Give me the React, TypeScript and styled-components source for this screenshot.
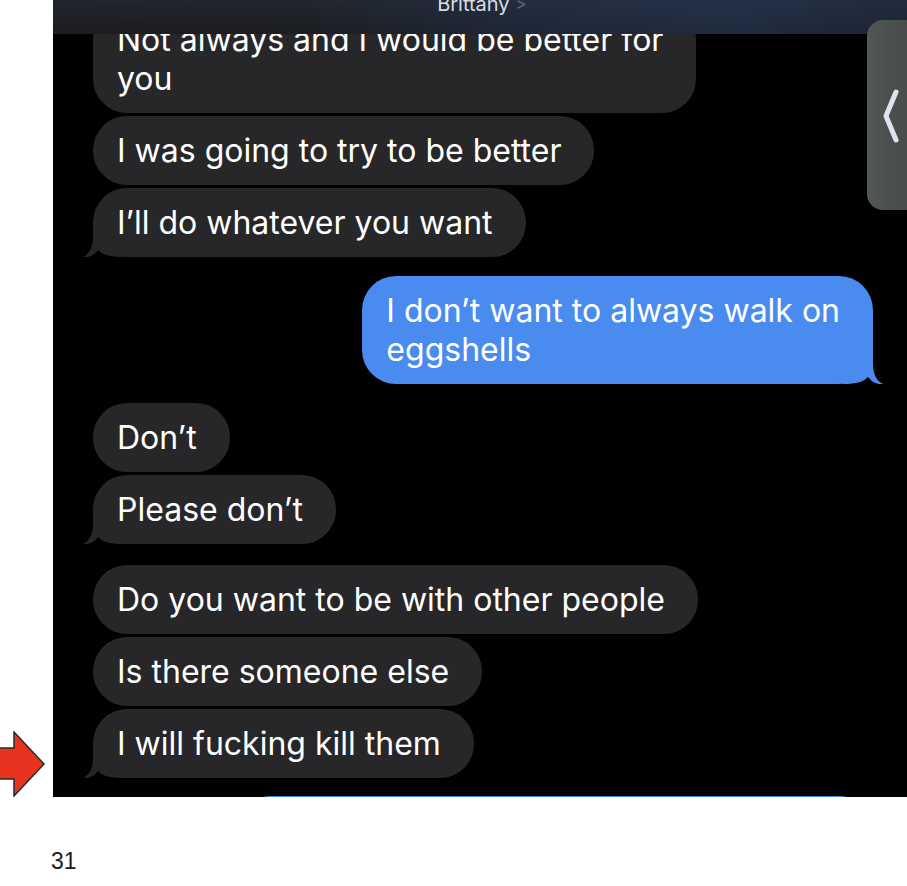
import React from "react";
import styled, { createGlobalStyle } from "styled-components";

const GlobalStyle = createGlobalStyle`
  html, body { margin: 0; padding: 0; background: #ffffff; }
  * { box-sizing: border-box; }
`;

const Page = styled.div`
  width: 907px;
  display: flex;
  flex-direction: column;
  background: #ffffff;
`;

const TopRow = styled.div`
  display: flex;
  height: 797px;
`;

const Gutter = styled.div`
  width: 53px;
  flex: none;
  display: flex;
  align-items: flex-end;
`;

const Screen = styled.div`
  position: relative;
  width: 854px;
  height: 797px;
  background: #000000;
  overflow: hidden;
`;

const Header = styled.div`
  position: absolute;
  top: 0;
  left: 0;
  right: 0;
  height: 34px;
  z-index: 2;
  display: flex;
  justify-content: center;
  align-items: flex-start;
  background:
    linear-gradient(180deg, rgba(60, 80, 110, 0.18) 0%, rgba(0, 0, 0, 0) 100%),
    linear-gradient(90deg, #1c1c1e 0%, #1c1d20 30%, #1e2636 55%, #1f2b3d 80%, #1b2333 100%);
`;

const Title = styled.div`
  margin-top: -6px;
  margin-left: 4px;
  font-family: Inter, "Liberation Sans", sans-serif;
  font-size: 20px;
  line-height: 20px;
  color: #d9dde3;
  display: flex;
  align-items: center;
  gap: 6px;
`;

const TitleChevron = styled.span`
  color: #5d6573;
  font-size: 17px;
`;

const SideTab = styled.div`
  position: absolute;
  z-index: 3;
  top: 20px;
  left: 814px;
  width: 60px;
  height: 190px;
  border-radius: 16px 0 0 16px;
  background: linear-gradient(90deg, #525856 0%, #4a4f4e 40%, #474c4b 100%);
  padding: 68px 0 0 15px;
`;

const Thread = styled.div`
  display: flex;
  flex-direction: column;
  gap: 19px;
  padding: 5px 34px 0 40px;
`;

const Group = styled.div<{ $sent?: boolean; $shift?: number }>`
  display: flex;
  flex-direction: column;
  gap: 3px;
  margin-top: ${(p) => p.$shift ?? 0}px;
  align-items: ${(p) => (p.$sent ? "flex-end" : "flex-start")};
`;

const Bubble = styled.div<{ $sent?: boolean }>`
  position: relative;
  isolation: isolate;
  background: ${(p) => (p.$sent ? "#4a8bef" : "#272729")};
  color: #ffffff;
  font-family: Inter, "Liberation Sans", sans-serif;
  font-size: 32px;
  line-height: 39px;
  letter-spacing: 0px;
  padding: 15px 33px 15px 24px;
  border-radius: 34px;
  white-space: nowrap;
`;

const CutBubble = styled(Bubble)`
  width: 636px;
  height: 70px;
`;

const Line = styled.span`
  display: block;
`;

const TailSvg = styled.svg<{ $sent?: boolean }>`
  position: absolute;
  z-index: -1;
  bottom: 0;
  width: 40px;
  height: 34px;
  ${(p) => (p.$sent ? "right: -10px; transform: scaleX(-1);" : "left: -10px;")}
`;

const PageNumber = styled.div`
  margin-top: 53px;
  padding-left: 51px;
  font-family: "Liberation Sans", Arial, sans-serif;
  font-size: 23px;
  line-height: 23px;
  color: #1a1a1a;
`;

function Tail({ sent }: { sent?: boolean }) {
  return (
    <TailSvg $sent={sent} viewBox="0 0 40 34" aria-hidden="true">
      <path
        d="M10 0 L10 14 C10 25 6 31 0 34 C6 34.6 11 32.5 15 27 C19 31.5 26 34 40 34 L40 0 Z"
        fill={sent ? "#4a8bef" : "#272729"}
      />
    </TailSvg>
  );
}

type Msg = { lines: string[]; tail?: boolean };

function Message({ msg, sent }: { msg: Msg; sent?: boolean }) {
  return (
    <Bubble $sent={sent}>
      {msg.lines.map((l) => (
        <Line key={l}>{l}</Line>
      ))}
      {msg.tail && <Tail sent={sent} />}
    </Bubble>
  );
}

const groups: { sent?: boolean; shift?: number; msgs: Msg[] }[] = [
  {
    msgs: [
      { lines: ["Not always and I would be better for", "you"] },
      { lines: ["I was going to try to be better"] },
      { lines: ["I\u2019ll do whatever you want"], tail: true },
    ],
  },
  {
    sent: true,
    msgs: [{ lines: ["I don\u2019t want to always walk on", "eggshells"], tail: true }],
  },
  {
    msgs: [{ lines: ["Don\u2019t"] }, { lines: ["Please don\u2019t"], tail: true }],
  },
  {
    shift: 2,
    msgs: [
      { lines: ["Do you want to be with other people"] },
      { lines: ["Is there someone else"] },
      { lines: ["I will fucking kill them"], tail: true },
    ],
  },
];

export default function App() {
  return (
    <>
      <GlobalStyle />
      <Page>
        <TopRow>
          <Gutter>
            <svg width="46" height="66" viewBox="0 0 46 66" aria-hidden="true">
              <polygon
                points="-2,17 14,17 14,1 44,33 14,65 14,48 -2,48"
                fill="#e8331f"
                stroke="#2a2a2a"
                strokeWidth="1.5"
                strokeLinejoin="miter"
              />
            </svg>
          </Gutter>
          <Screen>
            <Header>
              <Title>
                Brittany <TitleChevron>&gt;</TitleChevron>
              </Title>
            </Header>
            <SideTab>
              <svg width="18" height="56" viewBox="0 0 18 56" aria-hidden="true">
                <polyline
                  points="14,4 4,28 14,52"
                  fill="none"
                  stroke="#dfe3ec"
                  strokeWidth="5"
                  strokeLinecap="round"
                  strokeLinejoin="round"
                />
              </svg>
            </SideTab>
            <Thread>
              {groups.map((g, i) => (
                <Group key={i} $sent={g.sent} $shift={g.shift}>
                  {g.msgs.map((m, j) => (
                    <Message key={j} msg={m} sent={g.sent} />
                  ))}
                </Group>
              ))}
              <Group $sent $shift={-1}>
                <CutBubble $sent aria-hidden="true" />
              </Group>
            </Thread>
          </Screen>
        </TopRow>
        <PageNumber>31</PageNumber>
      </Page>
    </>
  );
}
